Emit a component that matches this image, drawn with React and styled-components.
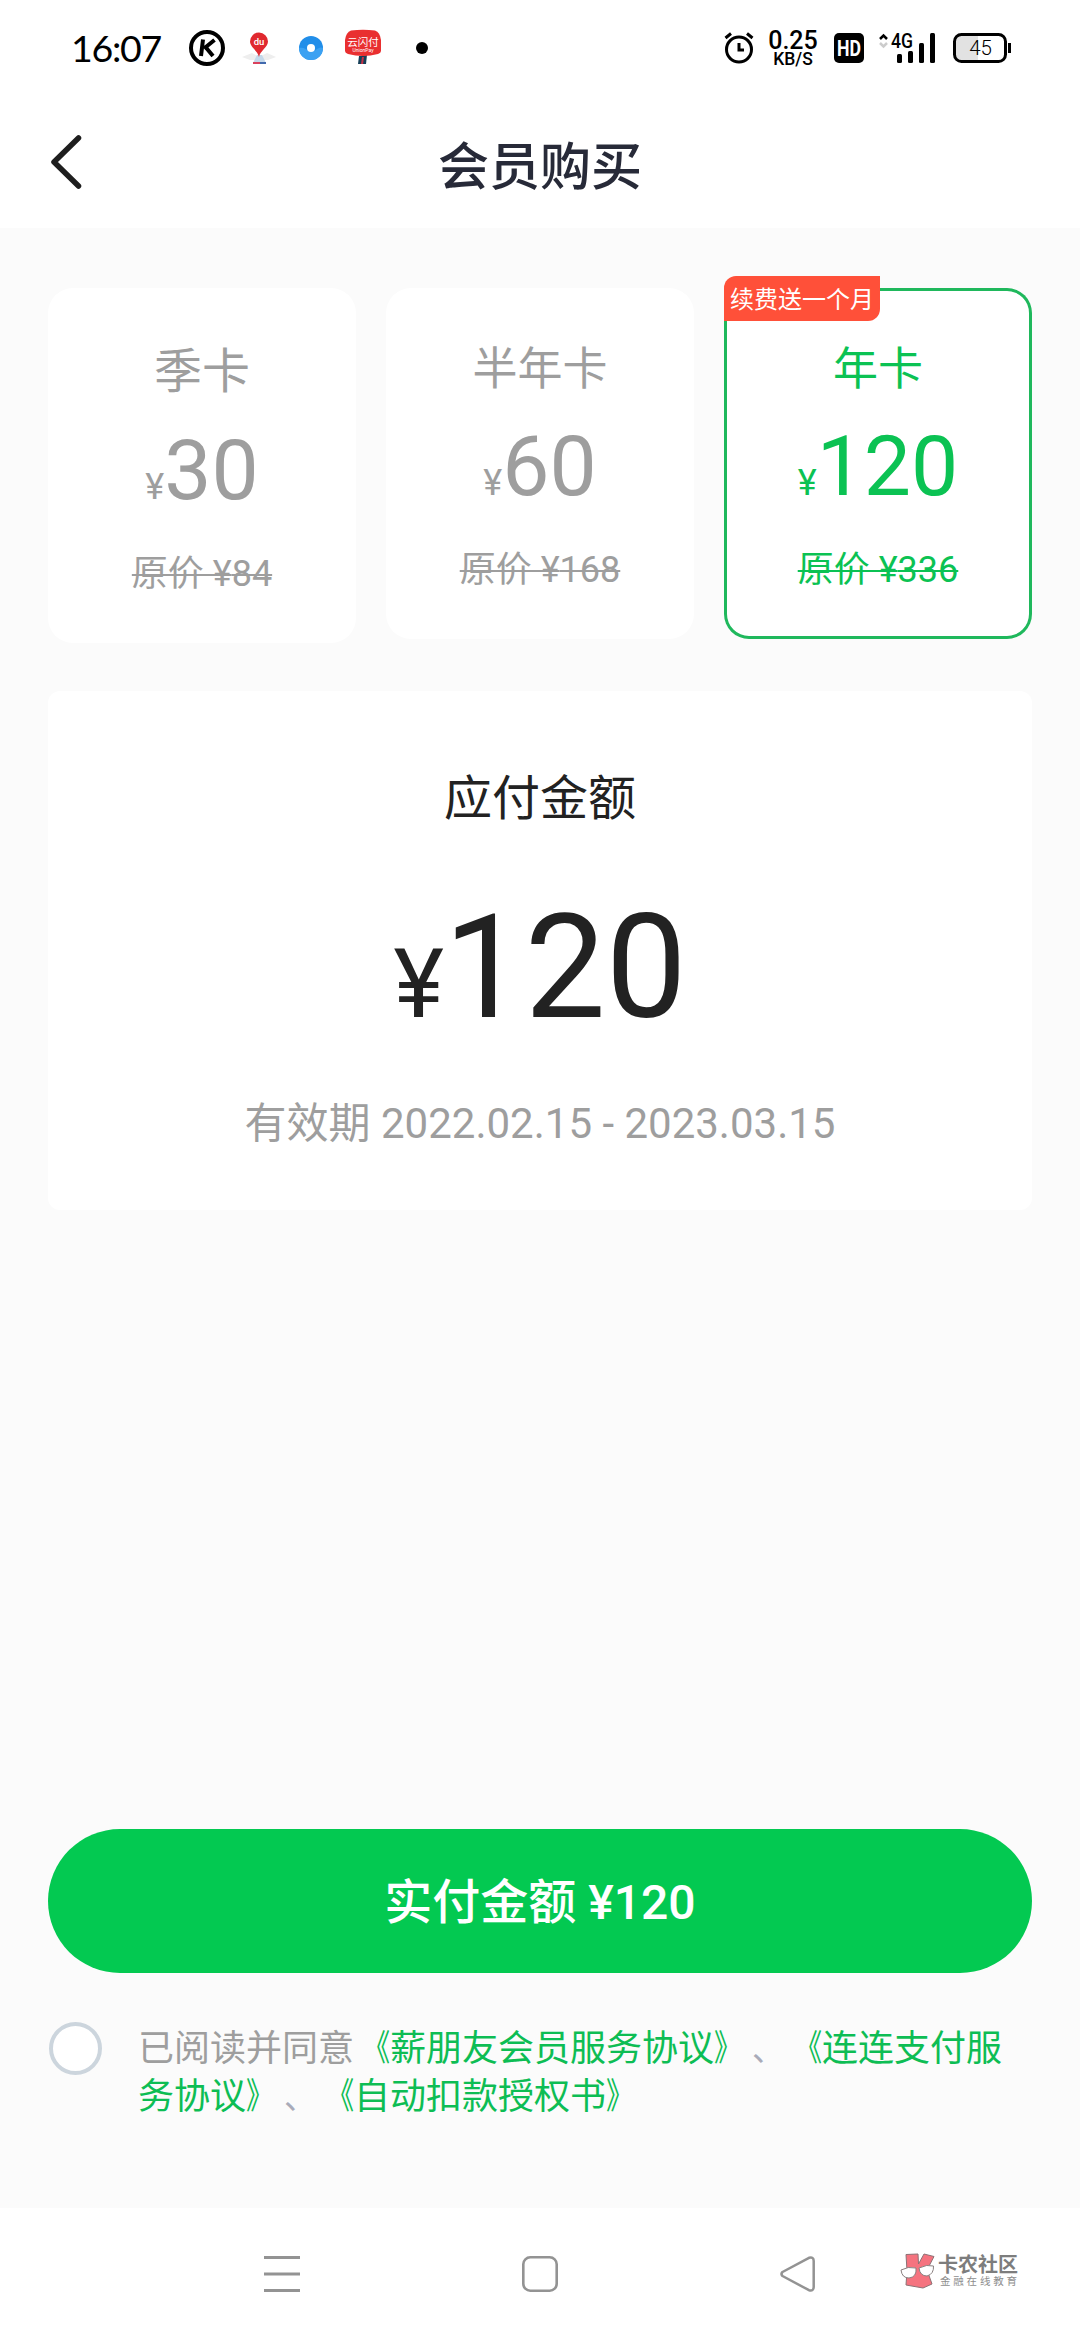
import React from "react";
import styled, { createGlobalStyle, css } from "styled-components";

const GREEN = "#03c951";
const GREY = "#9e9e9e";
const CJK = `"Noto Sans CJK SC", sans-serif`;

const GlobalStyle = createGlobalStyle`
  * { box-sizing: border-box; }
  body {
    margin: 0;
    background: #fbfbfb;
    font-family: Roboto, ${CJK};
    text-spacing-trim: space-all;
  }
`;

const Screen = styled.div`
  width: 1080px;
  height: 2340px;
  display: flex;
  flex-direction: column;
  overflow: hidden;
`;

const StatusBar = styled.div`
  height: 96px;
  padding: 0 69px 0 71px;
  display: flex;
  align-items: center;
  justify-content: space-between;
  background: #fff;
  color: #000;
`;

const StatusGroup = styled.div`
  display: flex;
  align-items: center;
  height: 96px;
`;

const Clock = styled.span`
  width: 118px;
  font: 400 37.5px/44px Lato, sans-serif;
  letter-spacing: -1.3px;
  white-space: nowrap;
`;

const Icon = styled.svg`
  display: block;
  flex: none;
  overflow: visible;
  margin-left: ${(p) => p.$gap || 0}px;
`;

const NetSpeed = styled.div`
  width: 54px;
  margin-left: 12px;
  padding-top: 2px;
  display: flex;
  flex-direction: column;
  align-items: center;
  font-family: Roboto, sans-serif;
  font-weight: 500;
`;

const SpeedValue = styled.span`
  font-size: 25px;
  line-height: 20px;
`;

const SpeedUnit = styled.span`
  font-size: 17.5px;
  line-height: 17px;
`;

const Header = styled.header`
  height: 132px;
  padding: 0 48px;
  display: grid;
  grid-template-columns: 80px 1fr 80px;
  align-items: center;
  background: #fff;
`;

const Title = styled.h1`
  margin: 2px 0 0;
  text-align: center;
  font-family: ${CJK};
  font-size: 51px;
  line-height: 60px;
  font-weight: 500;
  color: #272a38;
`;

const Content = styled.main`
  flex: 1;
  display: flex;
  flex-direction: column;
  padding: 60px 48px 0;
  background: #fbfbfb;
`;

const Plans = styled.div`
  display: flex;
  align-items: flex-start;
  justify-content: space-between;
  height: 403px;
`;

const PlanCard = styled.section`
  position: relative;
  width: 308px;
  padding: 55px 0 48px;
  display: flex;
  flex-direction: column;
  align-items: center;
  border-radius: 25px;
  background: #fff;
  color: ${(p) => (p.$selected ? "#0bc253" : GREY)};
  ${(p) =>
    p.$selected &&
    css`
      box-shadow: inset 0 0 0 3px #1fb85c;
    `}
`;

const PlanName = styled.div`
  font-size: ${(p) => (p.$large ? 48 : 45)}px;
  line-height: ${(p) => (p.$large ? 58 : 54)}px;
`;

const PlanPrice = styled.div`
  margin: 21px 0 33px;
  font-size: 84px;
  line-height: 98px;
`;

const Yen = styled.span`
  font-size: ${(p) => p.$size}px;
  line-height: 1;
`;

const OldPrice = styled.div`
  font-size: 36px;
  line-height: 42px;
  text-decoration: line-through;
  text-decoration-thickness: 2px;
`;

const Badge = styled.div`
  position: absolute;
  left: 0;
  top: -12px;
  width: 156px;
  height: 45px;
  padding-left: 6px;
  border-radius: 12px 0;
  background: #ff5039;
  color: #fff;
  font-size: 24px;
  line-height: 48px;
  white-space: nowrap;
`;

const AmountPanel = styled.section`
  height: 519px;
  padding-top: 80px;
  display: flex;
  flex-direction: column;
  align-items: center;
  border-radius: 12px;
  background: #fff;
  color: #222;
`;

const AmountLabel = styled.div`
  font-size: 48px;
  line-height: 56px;
`;

const Amount = styled.div`
  margin: 57px 0 47px;
  font-size: 144px;
  line-height: 168px;
`;

const Validity = styled.div`
  font-size: 42px;
  line-height: 50px;
  font-kerning: none;
  color: ${GREY};
`;

const PayButton = styled.button`
  height: 144px;
  margin: auto 0 49px;
  padding: 4px 0 0;
  border: 0;
  border-radius: 72px;
  background: ${GREEN};
  color: #fff;
  font: 500 48px/56px Roboto, ${CJK};
`;

const Agreement = styled.div`
  display: flex;
  align-items: flex-start;
  gap: 36px;
  height: 186px;
`;

const Radio = styled.span`
  flex: none;
  width: 53px;
  height: 53px;
  margin-left: 1px;
  border: 4px solid #ccd5dd;
  border-radius: 50%;
  background: #fff;
`;

const Terms = styled.p`
  width: 870px;
  margin: 3px 0 0;
  font-size: 36px;
  line-height: 48px;
  color: ${GREY};
`;

const TermsLink = styled.span`
  color: #0dbd54;
`;

const Bracket = styled.span`
  display: inline-block;
  width: 36px;
  line-height: 1;
  transform: scaleX(0.76);
  transform-origin: ${(p) => (p.$close ? "left" : "right")} center;
`;

const Comma = styled.span`
  display: inline-block;
  width: 36px;
  padding-left: 2px;
  font-size: 32px;
  line-height: 1;
  color: #a9abb9;
`;

const NavBar = styled.nav`
  height: 132px;
  display: flex;
  align-items: center;
  padding-left: 264px;
  background: #fff;
`;

const Watermark = styled.div`
  display: flex;
  align-items: center;
  margin: -7px 0 0 84px;
  gap: 3px;
`;

const WatermarkText = styled.div`
  display: flex;
  flex-direction: column;
  font-family: ${CJK};
  white-space: nowrap;
`;

const WatermarkName = styled.span`
  font-size: 20px;
  line-height: 21px;
  font-weight: 700;
  color: #7d7d7d;
`;

const WatermarkSub = styled.span`
  padding-left: 2px;
  font-size: 10.5px;
  line-height: 14px;
  letter-spacing: 2.8px;
  color: #8e8e8e;
`;

function Status() {
  return (
    <StatusBar>
      <StatusGroup>
        <Clock>16:07</Clock>
        <Icon width="36" height="36" viewBox="0 0 36 36">
          <circle cx="18" cy="18" r="16" fill="none" stroke="#000" strokeWidth="4" />
          <path d="M14 9.500L12 26M25.500 10L15 18.500M16.500 17L24 26" fill="none" stroke="#000" strokeWidth="4" />
        </Icon>
        <Icon $gap={16} width="36" height="36" viewBox="0 0 36 36">
          <path d="M1 27l10-4 7 4 8-4 9 4-8 3H9z" fill="#eee" />
          <path d="M16 25h5l4 8H12z" fill="#c4d8ea" />
          <path d="M12 32h7v2h-7z" fill="#d9415d" />
          <path d="M19 32h6v2h-6z" fill="#4169ad" />
          <path d="M18 27C17 21 9 17 9 11.500a9 9 0 0 1 18 0C27 17 19 21 18 27z" fill="#e0292f" />
          <text x="18" y="15" textAnchor="middle" fill="#fff" fontFamily="Roboto" fontSize="9.500" fontWeight="500">du</text>
        </Icon>
        <Icon $gap={22} width="24" height="24" viewBox="0 0 24 24">
          <circle cx="12" cy="12" r="12" fill="#218ee9" />
          <path d="M0 12a12 12 0 0 0 24 0c-5-3-8 6-14 3-4-2-5-4-10-3z" fill="#3ba1f2" />
          <circle cx="12" cy="12" r="4" fill="#fff" />
        </Icon>
        <Icon $gap={22} width="36" height="36" viewBox="0 0 36 36">
          <path d="M14 26l8-1-1 9h-8z" fill="#153f58" />
          <path d="M17 27h2l-1 7h-2z" fill="#c53045" />
          <path d="M6 .5Q18-1 30 .5Q35 2 36 10V21Q36 23 33 24Q18 28 3 24Q0 23 0 21V10Q1 2 6 .5z" fill="#e92f30" />
          <text x="18" y="15.500" textAnchor="middle" fill="#fff" fontFamily="Noto Sans CJK SC" fontSize="10.500">云闪付</text>
          <text x="18" y="22" textAnchor="middle" fill="#fff" fontFamily="Roboto" fontSize="5">UnionPay</text>
        </Icon>
        <Icon $gap={35} width="12" height="12" viewBox="0 0 12 12">
          <circle cx="6" cy="6" r="6" />
        </Icon>
      </StatusGroup>
      <StatusGroup>
        <Icon width="30" height="32" viewBox="0 0 30 32" fill="none" stroke="#000">
          <circle cx="15" cy="17.500" r="12.500" strokeWidth="3" />
          <path d="M15 11v7h5" strokeWidth="3" />
          <path d="M1.500 6L7 1.500M28.500 6L23 1.500" strokeWidth="3" />
        </Icon>
        <NetSpeed>
          <SpeedValue>0.25</SpeedValue>
          <SpeedUnit>KB/S</SpeedUnit>
        </NetSpeed>
        <Icon $gap={14} width="30" height="30" viewBox="0 0 30 30">
          <rect width="30" height="30" rx="5" />
          <text x="15" y="23" textAnchor="middle" textLength="24" lengthAdjust="spacingAndGlyphs" fill="#fff" fontFamily="Roboto" fontSize="22.500" fontWeight="700">HD</text>
        </Icon>
        <Icon $gap={15} width="57" height="30" viewBox="0 0 57 30">
          <path d="M1 6L4.500 2.500L8 6" fill="none" stroke="#000" strokeWidth="2.500" />
          <path d="M1 10L4.500 13.500L8 10" fill="none" stroke="#ccc" strokeWidth="2.500" />
          <text x="12" y="14.500" textLength="22" lengthAdjust="spacingAndGlyphs" fontFamily="Roboto" fontSize="19.500" fontWeight="500">4G</text>
          <rect x="18" y="21" width="5" height="9" rx="1.500" />
          <rect x="29" y="18" width="5" height="12" rx="1.500" />
          <rect x="40" y="10" width="5" height="20" rx="1.500" />
          <rect x="51" y="0" width="5" height="30" rx="1.500" />
        </Icon>
        <Icon $gap={17} width="58" height="30" viewBox="0 0 58 30">
          <path d="M8 2h17v26H8a6 6 0 0 1-6-6V8a6 6 0 0 1 6-6z" fill="#e2e2e2" />
          <rect x="1.500" y="1.500" width="51" height="27" rx="7" fill="none" stroke="#000" strokeWidth="3" />
          <path d="M56.500 10v10" stroke="#000" strokeWidth="3" />
          <text x="27.500" y="22" textAnchor="middle" fontFamily="Roboto" fontSize="20.500" fontWeight="300">45</text>
        </Icon>
      </StatusGroup>
    </StatusBar>
  );
}

const plans = [
  { name: "季卡", price: "30", old: "84", large: true },
  { name: "半年卡", price: "60", old: "168" },
  { name: "年卡", price: "120", old: "336", selected: true, badge: "续费送一个月" },
];

function Plan({ plan }) {
  return (
    <PlanCard $selected={plan.selected}>
      {plan.badge && <Badge>{plan.badge}</Badge>}
      <PlanName $large={plan.large}>{plan.name}</PlanName>
      <PlanPrice>
        <Yen $size={36}>¥</Yen>
        {plan.price}
      </PlanPrice>
      <OldPrice>原价 ¥{plan.old}</OldPrice>
    </PlanCard>
  );
}

function Document({ name }) {
  return (
    <TermsLink>
      <Bracket>《</Bracket>
      {name}
      <Bracket $close>》</Bracket>
    </TermsLink>
  );
}

export default function App() {
  return (
    <Screen>
      <GlobalStyle />
      <Status />
      <Header>
        <Icon $gap={2} width="34" height="56" viewBox="0 0 34 56">
          <path d="M28.500 4L4 28L28.500 52" fill="none" stroke="#1e1e1e" strokeWidth="5.500" strokeLinecap="round" strokeLinejoin="round" />
        </Icon>
        <Title>会员购买</Title>
      </Header>
      <Content>
        <Plans>
          {plans.map((plan) => (
            <Plan key={plan.name} plan={plan} />
          ))}
        </Plans>
        <AmountPanel>
          <AmountLabel>应付金额</AmountLabel>
          <Amount>
            <Yen $size={96}>¥</Yen>120
          </Amount>
          <Validity>有效期 2022.02.15 - 2023.03.15</Validity>
        </AmountPanel>
        <PayButton>实付金额 ¥120</PayButton>
        <Agreement>
          <Radio />
          <Terms>
            已阅读并同意
            <Document name="薪朋友会员服务协议" />
            <Comma>、</Comma>
            <Document name="连连支付服务协议" />
            <Comma>、</Comma>
            <Document name="自动扣款授权书" />
          </Terms>
        </Agreement>
      </Content>
      <NavBar>
        <Icon width="36" height="36" viewBox="0 0 36 36">
          <path d="M0 1.500h36M0 18h36M0 34.500h36" stroke="#939393" strokeWidth="3" />
        </Icon>
        <Icon $gap={222} width="36" height="36" viewBox="0 0 36 36">
          <rect x="1.300" y="1.300" width="33.400" height="33.400" rx="7" fill="none" stroke="#939393" strokeWidth="2.600" />
        </Icon>
        <Icon $gap={222} width="36" height="36" viewBox="0 0 36 36">
          <path d="M2.500 16L29 1.800Q33.700.5 33.700 5V31Q33.700 35.500 29 34.200L2.500 20Q.5 18 2.500 16z" fill="none" stroke="#939393" strokeWidth="2.500" strokeLinejoin="round" />
        </Icon>
        <Watermark>
          <Icon width="35" height="36" viewBox="0 0 35 36">
            <path d="M6 1.500L18 1L18.500 11L24 1L34 3.500L27 17L32 31L23 35L6 32L7 18z" fill="#f5737f" stroke="#8d7175" strokeWidth="1" />
            <path d="M1 17Q8 13 16 15Q17 24 9 25Q2 25 1 17zM19 15Q27 11 33.500 13Q34 21 27 23Q20 23 19 15z" fill="#fff" stroke="#8a8080" strokeWidth="1" />
          </Icon>
          <WatermarkText>
            <WatermarkName>卡农社区</WatermarkName>
            <WatermarkSub>金融在线教育</WatermarkSub>
          </WatermarkText>
        </Watermark>
      </NavBar>
    </Screen>
  );
}
